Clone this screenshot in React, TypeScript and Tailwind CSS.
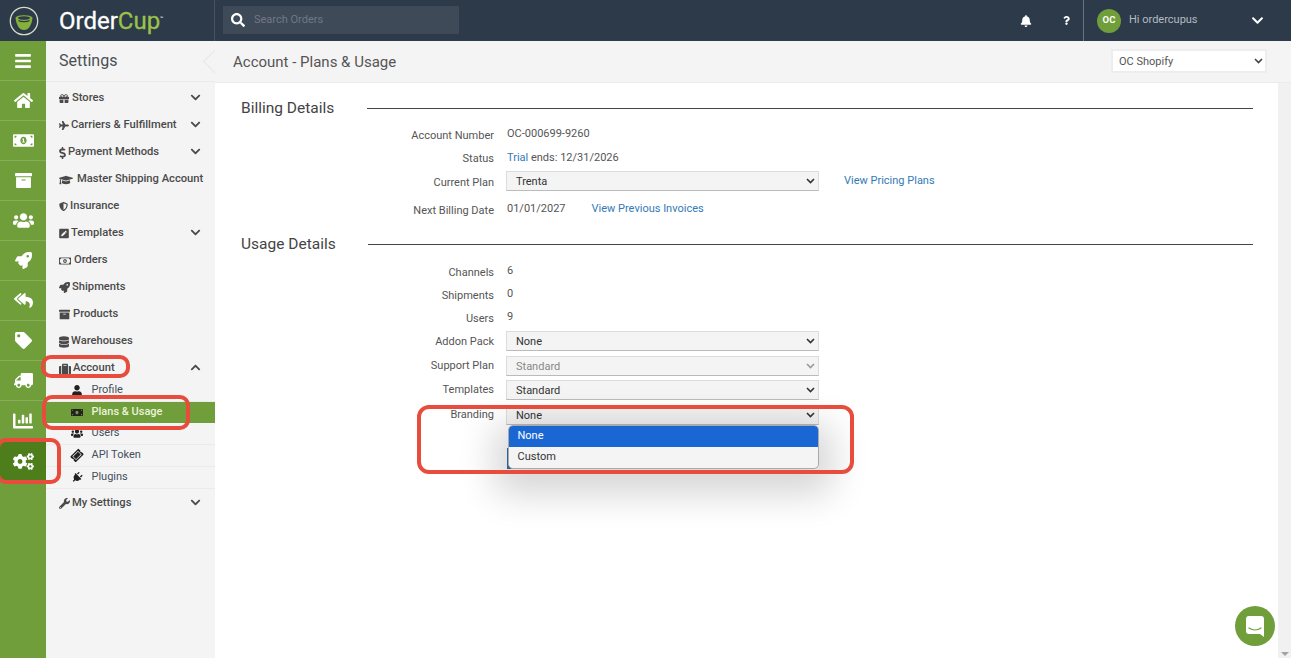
import React from 'react'
import {
  FaArchive, FaBars, FaBell, FaChartBar, FaChevronDown, FaChevronUp, FaCogs, FaDatabase,
  FaDollarSign, FaGift, FaGraduationCap, FaHome, FaMoneyBill, FaMoneyBillAlt, FaPenSquare, FaPlane, FaPlug,
  FaQuestion, FaRegMoneyBillAlt, FaReplyAll, FaRocket, FaSearch, FaShieldAlt, FaSuitcase, FaTag, FaTicketAlt, FaTruck, FaUser, FaUsers, FaWrench,
} from 'react-icons/fa'

const railItems = [
  { icon: FaBars, size: 18 },
  { icon: FaHome, size: 19 },
  { icon: FaMoneyBillAlt, size: 21 },
  { icon: FaArchive, size: 17 },
  { icon: FaUsers, size: 21 },
  { icon: FaRocket, size: 17 },
  { icon: FaReplyAll, size: 19 },
  { icon: FaTag, size: 17 },
  { icon: FaTruck, size: 19, cls: '-scale-x-100' },
  { icon: FaChartBar, size: 20 },
]

const navItems = [
  { label: 'Stores', icon: FaGift, chevron: true, iconCls: 'w-[10px] h-[11px]', gap: 'ml-[3px]' },
  { label: 'Carriers & Fulfillment', icon: FaPlane, chevron: true, iconCls: 'w-[10px] h-[11px]', gap: 'ml-[2px]' },
  { label: 'Payment Methods', icon: FaDollarSign, chevron: true, iconCls: 'w-[7px] h-[12px]', gap: 'ml-[2px]' },
  { label: 'Master Shipping Account', icon: FaGraduationCap, iconCls: 'w-[14px] h-[14px]', gap: 'ml-[4px]' },
  { label: 'Insurance', icon: FaShieldAlt, iconCls: 'w-[9px] h-[11px]', gap: 'ml-[2px]' },
  { label: 'Templates', icon: FaPenSquare, chevron: true, iconCls: 'w-[10px] h-[11px]', gap: 'ml-[2px]' },
  { label: 'Orders', icon: FaRegMoneyBillAlt, iconCls: 'w-[12px] h-[12px]', gap: 'ml-[3px]' },
  { label: 'Shipments', icon: FaRocket, iconCls: 'w-[11px] h-[11px]', gap: 'ml-[2px]' },
  { label: 'Products', icon: FaArchive, iconCls: 'w-[11px] h-[11px]', gap: 'ml-[3px]' },
  { label: 'Warehouses', icon: FaDatabase, iconCls: 'w-[10px] h-[12px]', gap: 'ml-[2px]' },
]

const subItems = [
  { label: 'Profile', icon: FaUser },
  { label: 'Plans & Usage', icon: FaMoneyBill, active: true },
  { label: 'Users', icon: FaUsers },
  { label: 'API Token', icon: FaTicketAlt, iconCls: '-rotate-45' },
  { label: 'Plugins', icon: FaPlug, iconCls: 'rotate-45' },
]

const Logo = () => (
  <svg width="30" height="30" viewBox="0 0 30 30" fill="none">
    <circle cx="15" cy="15" r="13.700" stroke="#d5dccb" strokeWidth="1.300" />
    <path d="M6.500 11.500c2-3 15-3 17 0-.5 6-3 12.500-8.500 12.500S7 17.500 6.500 11.500z" fill="#86b03c" />
    <ellipse cx="15" cy="12" rx="6" ry="1.800" fill="#2c3a49" />
    <path d="M9.500 14.500c2 1.500 9 1.500 11 0" stroke="#2c3a49" strokeWidth="1.200" />
  </svg>
)

const SelectArrow = ({ color }: { color: string }) => (
  <svg width="9" height="6" viewBox="0 0 9 6" fill="none" className="pointer-events-none absolute right-[4px] top-1/2 -translate-y-1/2">
    <path d="M1 1l3.500 3.500L8 1" stroke={color} strokeWidth="1.600" />
  </svg>
)

const Row = ({ label, children, className }: { label: string; children: React.ReactNode; className: string }) => (
  <div className={`flex ${className}`}>
    <div className="w-[253px] shrink-0 pt-[1px] text-right text-[#555]">{label}</div>
    <div className="ml-[13px] flex-1">{children}</div>
  </div>
)

const PlanSelect = ({ value, disabled }: { value: string; disabled?: boolean }) => (
  <div className="relative w-[313px]">
    <select
      disabled={disabled}
      defaultValue={value}
      className={`block h-[20px] w-full appearance-none rounded-none border-[1.500px] border-[#dcdcdc] border-b-[#bbb] bg-[#f4f4f4] pl-[9px] pt-[2px] text-[11px] ${disabled ? 'text-[#888]' : 'text-[#333]'}`}
    >
      <option>{value}</option>
    </select>
    <SelectArrow color={disabled ? '#999' : '#333'} />
  </div>
)

export default function App() {
  return (
    <div className="relative h-[658px] w-[1291px] overflow-hidden bg-white font-['Roboto',sans-serif] text-[11px] text-[#555]">
      <header className="flex h-[41px] bg-[#2c3a49]">
        <div className="flex w-[215px] items-center border-r border-[#46525f]">
          <div className="ml-[9px]"><Logo /></div>
          <div className="ml-[20px] text-[24px] leading-none text-white [-webkit-text-stroke:0.3px_currentColor]">
            Order<span className="text-[#9cc14a]">Cup</span>
            <span className="align-super text-[5px] text-[#aaa]">™</span>
          </div>
        </div>
        <div className="ml-[8px] mt-[6px] flex h-[28px] w-[236px] items-center bg-[#3f4a58] pl-[8px]">
          <FaSearch size={14} className="text-white" />
          <span className="ml-[9px] mt-[1px] text-[#6f7883]">Search Orders</span>
        </div>
        <div className="flex-1" />
        <div className="flex items-center">
          <FaBell size={12} className="text-white" />
          <FaQuestion size={9} className="ml-[30px] mr-[12px] text-white" />
        </div>
        <div className="flex w-[208px] items-center border-l border-[#6a7480] pl-[13px]">
          <div className="flex h-[24px] w-[24px] items-center justify-center rounded-full bg-[#6f9e3a] text-[9.500px] font-bold text-white">OC</div>
          <span className="ml-[8px] text-[#b4bac0]">Hi ordercupus</span>
          <FaChevronDown size={13} className="ml-[53px] text-white" />
        </div>
      </header>

      <div className="flex h-[617px]">
        <nav className="w-[46px] shrink-0 bg-[#6f9e3a]">
          {railItems.map(({ icon: Icon, size, cls }, i) => (
            <div key={i} className="flex h-[40px] items-center justify-center border-b border-[#86ae58] text-white">
              <Icon size={size} className={cls} />
            </div>
          ))}
          <div className="flex h-[40px] items-center justify-center bg-[#4e7d1c] text-white">
            <FaCogs size={21} />
          </div>
        </nav>

        <aside className="w-[169px] shrink-0 bg-[#f4f4f4]">
          <div className="flex h-[41px] items-center border-b border-[#ebebeb] pl-[13px] text-[16px] text-[#4a4f55]">Settings</div>
          <div className="pt-[3px] text-[11.200px]">
            {navItems.map(({ label, icon: Icon, chevron, iconCls, gap }) => (
              <div key={label} className="flex h-[27px] items-center pl-[13px] pr-[14px] font-medium text-[#4a4a4a]">
                <Icon className={`shrink-0 ${iconCls}`} />
                <span className={`${gap} whitespace-nowrap`}>{label}</span>
                {chevron && <FaChevronDown size={11} className="ml-auto -mt-[3px]" />}
              </div>
            ))}
            <div className="flex h-[27px] items-center pl-[13px] pr-[14px] font-medium text-[#4a4a4a]">
              <FaSuitcase size={12} />
              <span className="ml-[2px]">Account</span>
              <FaChevronUp size={11} className="ml-auto -mt-[3px]" />
            </div>
            <div className="-mt-[2px] text-[11px]">
              {subItems.map(({ label, icon: Icon, active, iconCls }, i) => (
                <div
                  key={label}
                  className={`flex items-center pl-[25px] ${i < 2 ? 'h-[21.500px]' : 'h-[22px]'} ${active ? 'bg-[#6f9e3a] text-[#eaf3dc] font-medium' : 'border-b border-[#ebebeb] text-[#44505c]'}`}
                >
                  <Icon size={11} className={`w-[12px] shrink-0 text-[#222] ${iconCls ?? ''}`} />
                  <span className="ml-[8.500px]">{label}</span>
                </div>
              ))}
            </div>
            <div className="mt-[1px] flex h-[27px] items-center pl-[13px] pr-[14px] font-medium text-[#4a4a4a]">
              <FaWrench size={11} />
              <span className="ml-[2px]">My Settings</span>
              <FaChevronDown size={11} className="ml-auto -mt-[3px]" />
            </div>
          </div>
        </aside>

        <main className="min-w-0 flex-1">
          <div className="flex h-[42px] items-center justify-between border-b border-[#ebebeb] bg-[#f4f4f4] pl-[18px] pr-[24px]">
            <h1 className="pt-[1px] text-[15px] text-[#555]">Account - Plans &amp; Usage</h1>
            <div className="relative mb-[2px] w-[156px]">
              <select defaultValue="OC Shopify" className="block h-[24px] w-full appearance-none border-2 border-[#ededed] bg-white pl-[6px] pt-[3px] text-[11px] text-[#555]">
                <option>OC Shopify</option>
              </select>
              <SelectArrow color="#444" />
            </div>
          </div>
          <div className="flex h-[575px]">
            <div className="flex-1 pl-[26px] pr-[25px]">
              <section className="flex h-[44px] items-start pt-[14px]">
                <h2 className="w-[126px] text-[15.500px] text-[#444]">Billing Details</h2>
                <div className="mt-[11px] h-px flex-1 bg-[#444]" />
              </section>
              <Row label="Account Number" className="h-[23px]"><div className="-mt-[1px]">OC-000699-9260</div></Row>
              <Row label="Status" className="h-[21px]"><div><span className="text-[#337ab7]">Trial</span> ends: 12/31/2026</div></Row>
              <div className="flex h-[28px] items-start">
                <div className="w-[253px] pt-[4px] text-right text-[#555]">Current Plan</div>
                <div className="ml-[12px]"><PlanSelect value="Trenta" /></div>
                <a className="ml-[25px] pt-[2px] text-[#337ab7]">View Pricing Plans</a>
              </div>
              <Row label="Next Billing Date" className="h-[34px] pt-[3px]">
                <span className="-mt-[1px] block">01/01/2027<a className="ml-[26px] text-[#337ab7]">View Previous Invoices</a></span>
              </Row>
              <section className="flex h-[31px] items-start">
                <h2 className="w-[127px] text-[15.500px] text-[#444]">Usage Details</h2>
                <div className="mt-[11px] h-px flex-1 bg-[#444]" />
              </section>
              <Row label="Channels" className="h-[23px]"><div className="-mt-[1px]">6</div></Row>
              <Row label="Shipments" className="h-[23px]"><div className="-mt-[1px]">0</div></Row>
              <Row label="Users" className="h-[21px]"><div className="-mt-[1px]">9</div></Row>
              <div className="flex h-[25px] items-start">
                <div className="w-[253px] pt-[3px] text-right">Addon Pack</div>
                <div className="ml-[12px]"><PlanSelect value="None" /></div>
              </div>
              <div className="flex h-[24px] items-start">
                <div className="w-[253px] pt-[2px] text-right">Support Plan</div>
                <div className="ml-[12px]"><PlanSelect value="Standard" disabled /></div>
              </div>
              <div className="flex h-[25px] items-start">
                <div className="w-[253px] pt-[2px] text-right">Templates</div>
                <div className="ml-[12px]"><PlanSelect value="Standard" /></div>
              </div>
              <div className="flex h-[43px] items-start">
                <div className="w-[253px] pt-[2px] text-right">Branding</div>
                <div className="relative ml-[12px]">
                  <PlanSelect value="None" />
                  {/* open native list, sits over the buttons below */}
                  <div className="absolute left-[1.500px] top-[19.500px] z-10 w-[311px] overflow-hidden rounded-[5px] border border-[#aaa] bg-[#f4f4f4] text-[#333] shadow-[0_12px_36px_14px_rgba(0,0,0,0.16)]">
                    <div className="flex h-[21px] items-center bg-[#1a67d4] pl-[9px] pt-[1px] text-white">None</div>
                    <div className="flex h-[21px] items-center pl-[9px] pt-[1px]">Custom</div>
                  </div>
                </div>
              </div>
              <div className="ml-[266px] flex gap-[8px]">
                <div className="h-[21px] w-[74px] bg-[#2f6fa8]" />
                <div className="h-[21px] w-[84px] bg-[#999]" />
              </div>
            </div>
            <div className="relative w-[13px] shrink-0 bg-[#f1f1f1]">
              <div className="absolute bottom-[2px] left-[3px] h-0 w-0 border-x-[4px] border-t-[4px] border-x-transparent border-t-[#a3a3a3]" />
            </div>
          </div>
        </main>
      </div>

      {/* notch between sidebar title and page title */}
      <div className="absolute left-[200px] top-[41px] h-[41px] w-[15px] overflow-hidden">
        <div className="absolute left-[9px] top-[6px] h-[29px] w-[29px] rotate-45 border-b border-l border-[#e6e6e6] bg-[#f4f4f4]" />
      </div>

      {/* red review marks drawn on the screenshot */}
      <div className="pointer-events-none absolute left-[41px] top-[355px] z-20 h-[23px] w-[89px] rounded-[10px] border-[4px] border-[#e74c3c]" />
      <div className="pointer-events-none absolute left-[42px] top-[395px] z-20 h-[35px] w-[148px] rounded-[10px] border-[4px] border-[#e74c3c]" />
      <div className="pointer-events-none absolute -left-[4px] top-[438px] z-20 h-[46px] w-[65px] rounded-[10px] border-[4px] border-[#e74c3c]" />
      <div className="pointer-events-none absolute left-[417px] top-[405px] z-20 h-[69px] w-[437px] rounded-[12px] border-[4px] border-[#e74c3c]" />

      <div className="absolute bottom-[12px] right-[16px] z-20 flex h-[40px] w-[40px] items-center justify-center rounded-full bg-[#6f9e3a]">
        <svg width="18" height="21" viewBox="0 0 18 21">
          <path d="M3 0h12a3 3 0 0 1 3 3v18l-4-3H3a3 3 0 0 1-3-3V3a3 3 0 0 1 3-3z" fill="#fff" />
          <path d="M3 12c3.500 2.400 8.500 2.400 12 0" fill="none" stroke="#6f9e3a" strokeWidth="1.200" strokeLinecap="round" />
        </svg>
      </div>
    </div>
  )
}
